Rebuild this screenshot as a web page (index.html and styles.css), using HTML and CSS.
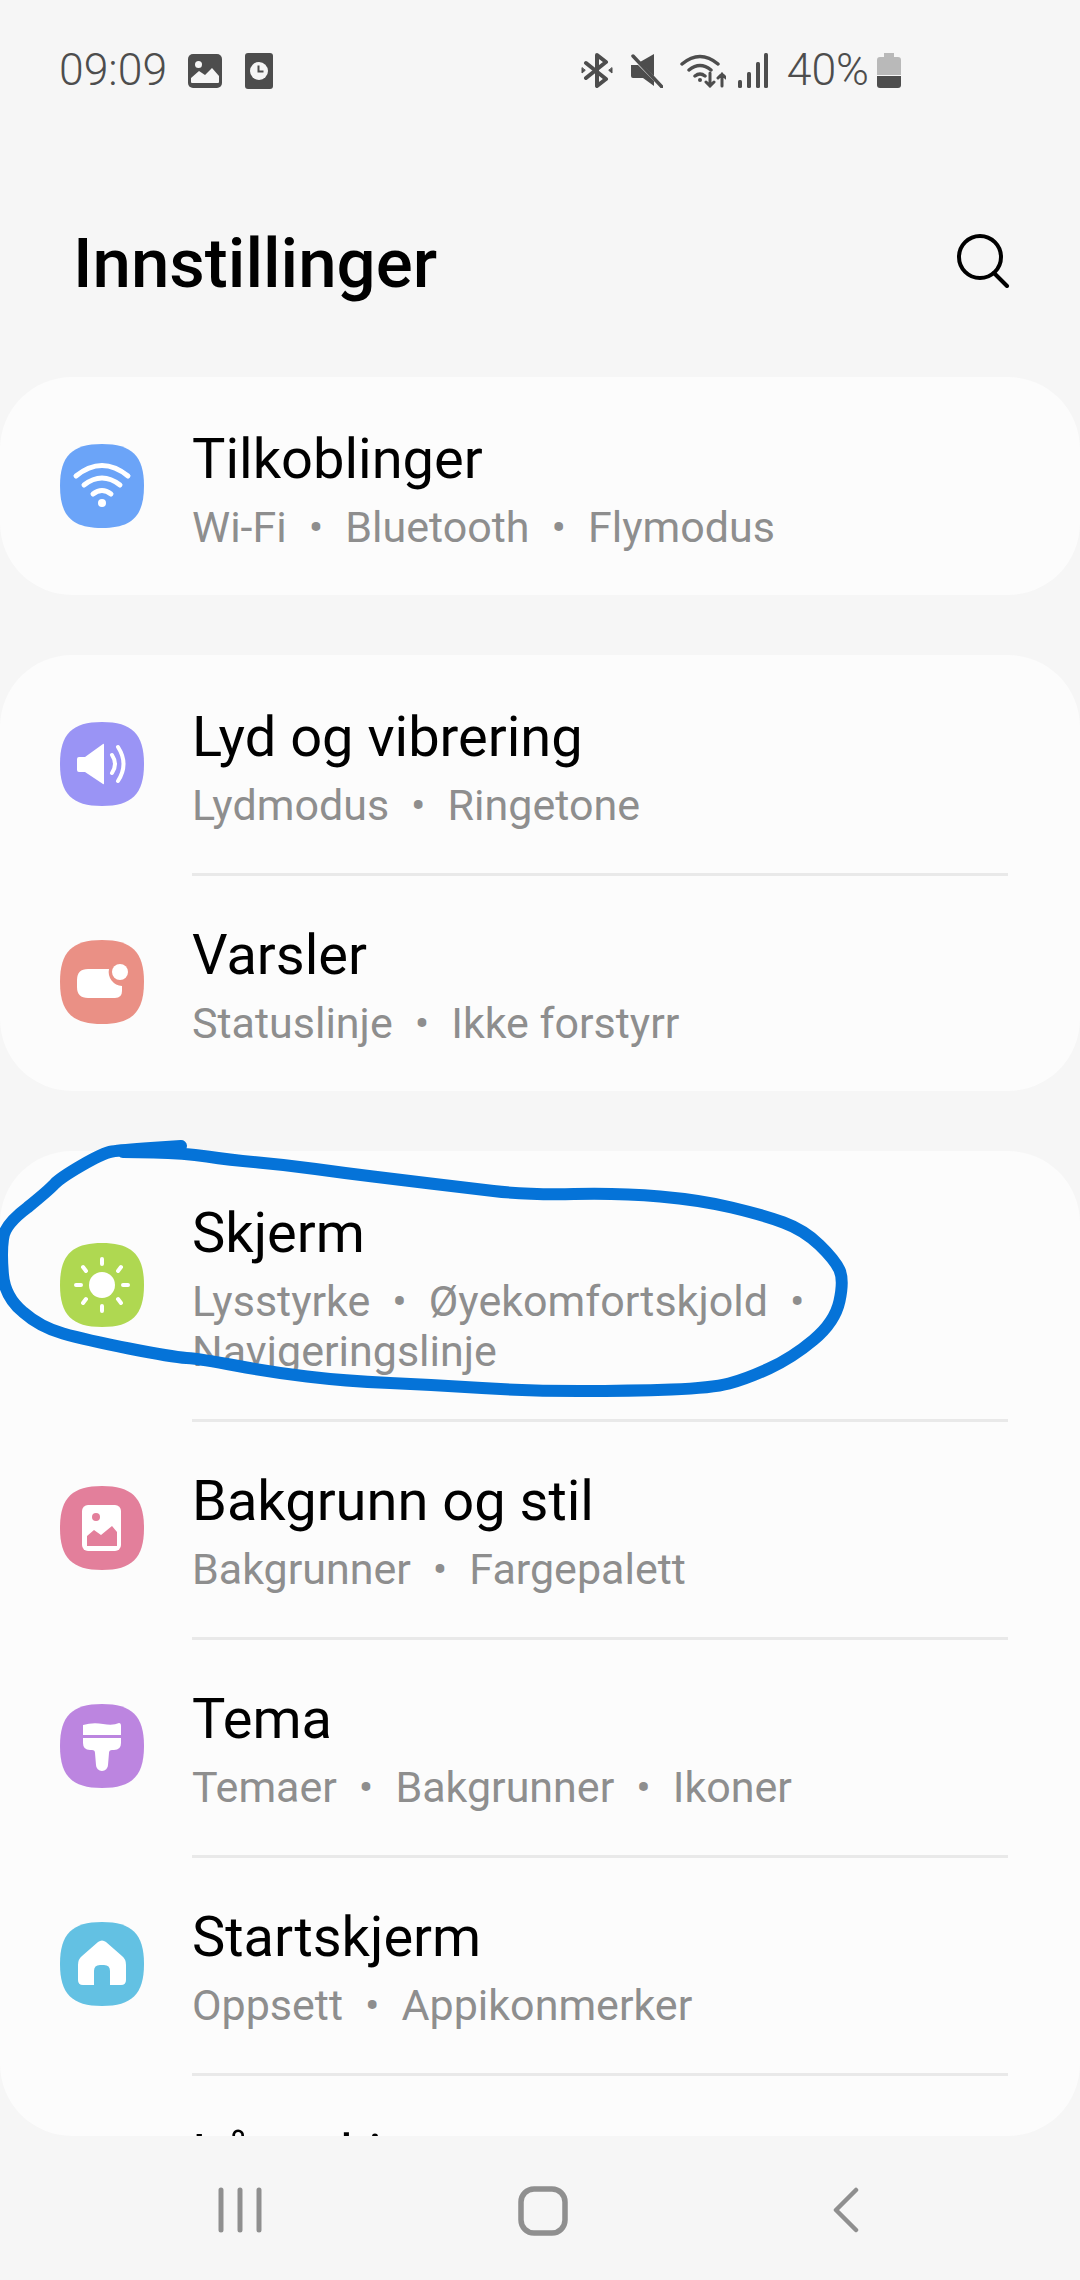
FILE: index.html
```html
<!DOCTYPE html>
<html lang="no">
<head>
    <meta charset="UTF-8">
    <meta name="viewport" content="width=device-width, initial-scale=1.0">
    <title>Innstillinger</title>
    <link rel="stylesheet" href="styles.css">
</head>
<body>
    <div class="status-bar">
        <div class="status-left">
            <span class="status-text">09:09</span>
            <svg class="st-gallery" viewBox="0 0 34 34"><rect width="34" height="34" rx="5" fill="#4d4d4d"/><circle cx="10.500" cy="10.500" r="3.500" fill="#f6f6f6"/><path d="M4 29q-1 0-1-1v-4l8-7 6 4 7-7 7 8v6q0 1-1 1z" fill="#f6f6f6"/></svg>
            <svg class="st-alarm" viewBox="0 0 28 36"><rect width="28" height="36" rx="3" fill="#4d4d4d"/><circle cx="14" cy="18" r="9" fill="#f6f6f6"/><path d="M13.500 12.500v6h5" fill="none" stroke="#4d4d4d" stroke-width="2"/></svg>
        </div>
        <div class="status-right">
            <svg class="st-bt" viewBox="0 0 32 35" fill="none" stroke="#4d4d4d" stroke-width="4" stroke-linejoin="round" stroke-linecap="round"><path d="M5 10l20 16-9 7V2l9 7L5 25"/><path d="M1 15v5l3-2.500zM31 15v5l-3-2.500z" fill="#4d4d4d" stroke-width="1"/></svg>
            <svg class="st-mute" viewBox="0 0 33 35"><path d="M24 1v22L10 9zM1 12h7l16 16v5L13 25H3q-2 0-2-2z" fill="#4d4d4d"/><path d="M3 3l29 31" stroke="#4d4d4d" stroke-width="3.500" stroke-linecap="round"/></svg>
            <svg class="st-wifi" viewBox="0 0 46 35" fill="none" stroke="#4d4d4d" stroke-width="3.500" stroke-linecap="round"><path d="M2 11q18-15 36 0M9 17q11-9 22 0M15 23q5-4 10 0"/><circle cx="20" cy="27" r="2" fill="#4d4d4d" stroke="none"/><path d="M30 20v13M26 29l4 4 4-4M42 33V21M38 25l4-4 4 4" stroke-width="3"/></svg>
            <svg class="st-signal" viewBox="0 0 30 35" fill="#4d4d4d"><rect x="0" y="27" width="4" height="8" rx="1.500"/><rect x="9" y="19" width="4" height="16" rx="1.500"/><rect x="18" y="9" width="4" height="26" rx="1.500"/><rect x="26" y="0" width="4" height="35" rx="1.500"/></svg>
            <span class="status-text status-battery">40%</span>
            <svg class="st-battery" viewBox="0 0 24 35"><path d="M7 0h10v4h4q3 0 3 3v15H0V7q0-3 3-3h4z" fill="#b9b9b9"/><path d="M0 23h24v9q0 3-3 3H3q-3 0-3-3z" fill="#4d4d4d"/></svg>
        </div>
    </div>

    <div class="app-header">
        <h1>Innstillinger</h1>
        <svg class="search-icon" viewBox="0 0 54 54" fill="none" stroke="#000" stroke-width="4" stroke-linecap="round"><circle cx="24" cy="23" r="21"/><path d="M38 39l13 13"/></svg>
    </div>

    <div class="settings-list">
        <div class="card">
            <div class="row">
                <svg class="row-icon" viewBox="0 0 84 84"><path class="blue" d="M42 0C72 0 84 12 84 42S72 84 42 84 0 72 0 42 12 0 42 0z"/><path d="M16 32q26-21 52 0M24 41q18-14 36 0M33 50q9-7 18 0" fill="none" stroke="#fff" stroke-width="5" stroke-linecap="round"/><circle cx="42" cy="59" r="4" fill="#fff"/></svg>
                <div class="row-text">
                    <div class="row-title">Tilkoblinger</div>
                    <div class="row-sub">Wi-Fi<i>•</i>Bluetooth<i>•</i>Flymodus</div>
                </div>
            </div>
        </div>

        <div class="card">
            <div class="row">
                <svg class="row-icon" viewBox="0 0 84 84"><path class="purple" d="M42 0C72 0 84 12 84 42S72 84 42 84 0 72 0 42 12 0 42 0z"/><path d="M17 37q0-2 2-2h6l18-13q1-1 1 1v38q0 2-1 1L25 50h-6q-2 0-2-2z" fill="#fff"/><path d="M52 33q6 9 0 18M58 25q11 17 0 34" fill="none" stroke="#fff" stroke-width="4" stroke-linecap="round"/></svg>
                <div class="row-text">
                    <div class="row-title">Lyd og vibrering</div>
                    <div class="row-sub">Lydmodus<i>•</i>Ringetone</div>
                </div>
            </div>
            <div class="row">
                <svg class="row-icon" viewBox="0 0 84 84"><path class="salmon" d="M42 0C72 0 84 12 84 42S72 84 42 84 0 72 0 42 12 0 42 0z"/><path d="M28 29h21a14 14 0 0 0 13 17v5q0 7-7 7H28q-11 0-11-11v-7q0-11 11-11z" fill="#fff"/><circle cx="60" cy="32" r="8" fill="#fff"/></svg>
                <div class="row-text">
                    <div class="row-title">Varsler</div>
                    <div class="row-sub">Statuslinje<i>•</i>Ikke forstyrr</div>
                </div>
            </div>
        </div>

        <div class="card">
            <div class="row">
                <svg class="row-icon" viewBox="0 0 84 84"><path class="green" d="M42 0C72 0 84 12 84 42S72 84 42 84 0 72 0 42 12 0 42 0z"/><circle cx="42" cy="42" r="13" fill="#fff"/><path d="M42 16v5M42 63v5M16 42h5M63 42h5M23 24l3 4M61 24l-3 4M23 60l3-4M61 60l-3-4" stroke="#fff" stroke-width="4" stroke-linecap="round"/></svg>
                <div class="row-text">
                    <div class="row-title">Skjerm</div>
                    <div class="row-sub">Lysstyrke<i>•</i>Øyekomfortskjold<i>•</i> Navigeringslinje</div>
                </div>
            </div>
            <div class="row">
                <svg class="row-icon" viewBox="0 0 84 84"><path class="pink" d="M42 0C72 0 84 12 84 42S72 84 42 84 0 72 0 42 12 0 42 0z"/><rect x="22" y="19" width="39" height="46" rx="6" fill="#fff"/><circle cx="36" cy="31" r="4" fill="#e37f9b"/><path d="M27 60V50l7-6 7 5 11-9 5 6v14z" fill="#e37f9b"/></svg>
                <div class="row-text">
                    <div class="row-title">Bakgrunn og stil</div>
                    <div class="row-sub">Bakgrunner<i>•</i>Fargepalett</div>
                </div>
            </div>
            <div class="row">
                <svg class="row-icon" viewBox="0 0 84 84"><path class="violet" d="M42 0C72 0 84 12 84 42S72 84 42 84 0 72 0 42 12 0 42 0z"/><path d="M23 21q10-3 20-1t16-1q2 0 2 3v9H23zM23 34h38v5q0 7-7 7h-2q-3 0-3 3l-1 12a6 6 0 0 1-12 0l-1-12q0-3-3-3h-2q-7 0-7-7z" fill="#fff"/></svg>
                <div class="row-text">
                    <div class="row-title">Tema</div>
                    <div class="row-sub">Temaer<i>•</i>Bakgrunner<i>•</i>Ikoner</div>
                </div>
            </div>
            <div class="row">
                <svg class="row-icon" viewBox="0 0 84 84"><path class="cyan" d="M42 0C72 0 84 12 84 42S72 84 42 84 0 72 0 42 12 0 42 0z"/><path d="M38 20q4-3 8 0l16 14q4 3 4 9v15q0 5-5 5H50V49q0-6-6-6h-4q-6 0-6 6v14H23q-5 0-5-5V43q0-6 4-9z" fill="#fff"/></svg>
                <div class="row-text">
                    <div class="row-title">Startskjerm</div>
                    <div class="row-sub">Oppsett<i>•</i>Appikonmerker</div>
                </div>
            </div>
            <div class="row">
                <svg class="row-icon" viewBox="0 0 84 84"></svg>
                <div class="row-text">
                    <div class="row-title">Låseskjerm</div>
                </div>
            </div>
        </div>
    </div>

    <div class="nav-bar">
        <svg class="nav-recent" viewBox="0 0 44 46" fill="none" stroke="#8f8f8f" stroke-width="5" stroke-linecap="round"><path d="M3 3v40M22 3v40M41 3v40"/></svg>
        <svg class="nav-home" viewBox="0 0 50 50"><rect x="3" y="3" width="44" height="44" rx="13" fill="none" stroke="#8f8f8f" stroke-width="5.500"/></svg>
        <svg class="nav-back" viewBox="0 0 26 46" fill="none" stroke="#8f8f8f" stroke-width="4.500" stroke-linecap="round" stroke-linejoin="round"><path d="M23 3L3 23l20 20"/></svg>
    </div>

    <svg class="scribble" viewBox="0 0 1080 2280"><path d="M181 1146L151 1148Q121 1150 112 1151.500Q103 1153 81.500 1165.500Q60 1178 54.500 1184Q49 1190 27.500 1207.500Q4 1225 3 1239Q1 1253 3 1275Q5 1297 23 1312Q40 1327 63 1333.500Q86 1340 129 1348.500Q172 1357 186.500 1358Q201 1359 235.500 1365.500Q270 1372 307 1376.500Q344 1381 390 1383Q436 1385 482 1388Q528 1391 579.500 1391Q631 1391 671.500 1389.500Q712 1388 729 1383.500Q746 1379 769 1368.500Q792 1358 813.500 1340Q835 1322 839.500 1301Q844 1280 839.500 1270Q835 1260 819.500 1245Q804 1230 783.500 1222.500Q763 1215 731.500 1207.500Q700 1200 660 1196.500Q620 1193 574 1194Q528 1195 493.500 1191Q459 1187 430.500 1183.500Q402 1180 373 1176.500Q344 1173 315.500 1169Q287 1165 258.500 1162.500Q230 1160 207 1156.500Q184 1153 153.500 1152.500L123 1152"/></svg>
</body>
</html>
```

FILE: styles.css
```css
* {
    margin: 0;
    padding: 0;
    box-sizing: border-box;
}

body {
    width: 1080px;
    height: 2280px;
    background: #f6f6f6;
    font-family: 'Roboto', sans-serif;
    display: flex;
    flex-direction: column;
    overflow: hidden;
    position: relative;
}

.status-bar {
    height: 142px;
    flex-shrink: 0;
    padding: 53px 179px 0 59px;
    display: flex;
    justify-content: space-between;
    align-items: flex-start;
}

.status-left, .status-right {
    display: flex;
    align-items: center;
    height: 35px;
}

.status-text {
    font-size: 44.5px;
    font-weight: 300;
    color: #4d4d4d;
    line-height: 35px;
}

.st-gallery { width: 34px; height: 34px; margin-left: 21px; }
.st-alarm { width: 28px; height: 36px; margin-left: 23px; }
.st-bt { width: 32px; height: 35px; }
.st-mute { width: 33px; height: 35px; margin-left: 17px; }
.st-wifi { width: 46px; height: 35px; margin-left: 17px; }
.st-signal { width: 30px; height: 35px; margin-left: 12px; }
.status-battery { margin-left: 19px; }
.st-battery { width: 24px; height: 35px; margin-left: 8px; }

.app-header {
    height: 235px;
    flex-shrink: 0;
    padding: 0 70px 0 73px;
    display: flex;
    justify-content: space-between;
}

.app-header h1 {
    font-size: 69px;
    font-weight: 500;
    color: #000;
    line-height: 80px;
    margin-top: 82px;
}

.search-icon {
    width: 54px;
    height: 54px;
    margin-top: 92px;
}

.settings-list {
    height: 1759px;
    flex-shrink: 0;
    overflow: hidden;
    display: flex;
    flex-direction: column;
    gap: 60px;
    border-radius: 0 0 72px 72px;
}

.card {
    background: #fcfcfc;
    border-radius: 72px;
    flex-shrink: 0;
}

.row {
    display: flex;
    align-items: center;
    padding: 0 72px 0 60px;
}

.row-icon {
    width: 84px;
    height: 84px;
    flex-shrink: 0;
}

.row-text {
    margin-left: 48px;
    flex: 1;
    padding: 50px 0 43px;
}

/* divider only runs under the text column */
.row + .row .row-text {
    border-top: 3px solid #e9e9e9;
    padding-top: 47px;
}

.row-title {
    font-size: 56px;
    line-height: 64px;
    color: #000;
}

.row-sub {
    font-size: 43px;
    line-height: 50px;
    margin-top: 11px;
    color: #8e8e8e;
}

.row-sub i {
    font-style: normal;
    margin: 0 22px;
}

.nav-bar {
    height: 144px;
    flex-shrink: 0;
    display: flex;
    align-items: flex-start;
    padding-top: 51px;
}

.nav-recent { width: 44px; height: 46px; margin-left: 218px; }
.nav-home { width: 50px; height: 50px; margin-left: 256px; margin-top: -1px; }
.nav-back { width: 26px; height: 46px; margin-left: 265px; }

/* marker pen drawn over the screenshot */
.scribble {
    position: absolute;
    left: 0;
    top: 0;
    width: 1080px;
    height: 2280px;
    pointer-events: none;
}

.scribble path {
    fill: none;
    stroke: #0573d8;
    stroke-width: 12;
    stroke-linecap: round;
    stroke-linejoin: round;
}

.blue { fill: #6ba4f8; }
.purple { fill: #9a94f5; }
.salmon { fill: #ea9085; }
.green { fill: #afd851; }
.pink { fill: #e37f9b; }
.violet { fill: #bc85e0; }
.cyan { fill: #63c1e3; }
```
